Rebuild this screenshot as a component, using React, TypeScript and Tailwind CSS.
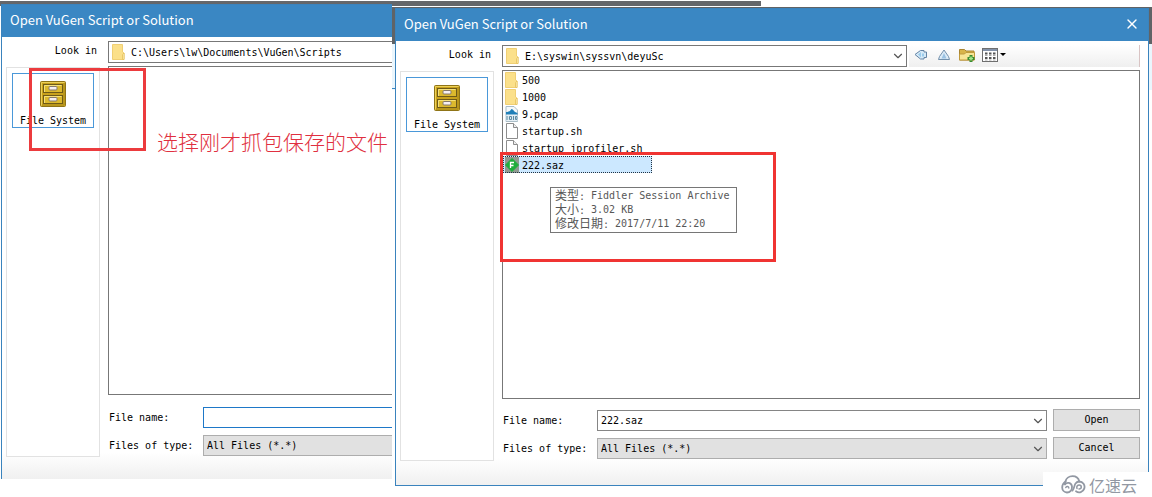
import { useId } from 'react'
import type { ReactNode } from 'react'
import { ChevronDown, X } from 'lucide-react'
import clsx from 'clsx'

type FileKind = 'folder' | 'pcap' | 'plain' | 'saz'

type FileEntry = {
  name: string
  kind: FileKind
  selected?: boolean
}

const FILES: FileEntry[] = [
  { name: '500', kind: 'folder' },
  { name: '1000', kind: 'folder' },
  { name: '9.pcap', kind: 'pcap' },
  { name: 'startup.sh', kind: 'plain' },
  { name: 'startup_jprofiler.sh', kind: 'plain' },
  { name: '222.saz', kind: 'saz', selected: true },
]

const FolderIcon = () => (
  <svg viewBox="0 0 16 16" className="size-4 shrink-0">
    <path d="M1.500.5h10v7.500l1.500 1v6.500H1.500z" fill="#fbe08a" stroke="#f0cf74" />
    <path d="M11.500 10.500l1.500-1.500v6.500h-1.500z" fill="#fff3c4" stroke="#e5bf55" strokeWidth=".8" />
  </svg>
)

const PlainIcon = () => (
  <svg viewBox="0 0 16 16" className="size-4 shrink-0">
    <path d="M2.500.5h7l4 4v11h-11z" fill="#fff" stroke="#8d8d8d" />
    <path d="M9.500.5v4h4" fill="#eee" stroke="#8d8d8d" />
  </svg>
)

const PcapIcon = () => (
  <svg viewBox="0 0 16 16" className="size-4 shrink-0">
    <path d="M2 .5h8l3.500 3.500v11.500H2z" fill="#f4f8fa" stroke="#a9bcc6" />
    <path d="M2 8.500V6c2 0 4-.5 5.500-3C10 3.500 9.500 6 13.500 7v1.500z" fill="#1f7fb8" />
    <path d="M1 9.500h13v5H1z" fill="#dbe9f0" />
    <path d="M3 10v4M5.500 10.500h2v3h-2zM9.500 10v4M11.500 10.500h1.500v3h-1.500z" fill="none" stroke="#5d8ba3" />
  </svg>
)

const SazIcon = () => (
  <svg viewBox="0 0 16 16" className="size-4 shrink-0">
    <path d="M1 0h14v16H1z" fill="#8f9a90" />
    <path d="M8 1.500L14.500 8 8 14.500 1.500 8z" fill="#1fae3c" stroke="#1fae3c" strokeLinejoin="round" />
    <path d="M6.500 11V5.500H10M6.500 8.500h3" fill="none" stroke="#fff" strokeWidth="1.300" />
  </svg>
)

const ICONS: Record<FileKind, () => ReactNode> = {
  folder: FolderIcon,
  plain: PlainIcon,
  pcap: PcapIcon,
  saz: SazIcon,
}

const CabinetIcon = () => (
  <svg viewBox="0 0 26 26" className="size-[26px] shrink-0">
    <rect x=".5" y=".5" width="25" height="25" rx="1" fill="#c9a21c" stroke="#8f7417" />
    <path d="M1.500 24.500v-23h23" fill="none" stroke="#ecd05a" />
    <path d="M24 2v22H2" fill="none" stroke="#a88a1c" />
    <rect x="3.500" y="3.500" width="19" height="8" fill="#dcb92d" stroke="#6e5a18" />
    <rect x="3.500" y="14.500" width="19" height="8" fill="#dcb92d" stroke="#6e5a18" />
    <path d="M4.500 11V4.500h17M4.500 22v-6.500h17" fill="none" stroke="#f5e07a" />
    <rect x="9" y="5.500" width="8" height="3.500" rx="1" fill="#f6f0f2" stroke="#85796a" />
    <rect x="9" y="16.500" width="8" height="3.500" rx="1" fill="#f6f0f2" stroke="#85796a" />
  </svg>
)

const BackIcon = () => (
  <svg viewBox="0 0 16 16" className="size-4">
    <path d="M2 7.500l5.500-4H11V5h2.500v5.500H11V12H7.500z" fill="#d7eaf7" stroke="#6484a5" strokeLinejoin="round" />
    <path d="M5 7.500L8 5v5.500zM9 6.500h2v3H9z" fill="#9bccec" />
  </svg>
)

const UpIcon = () => (
  <svg viewBox="0 0 16 16" className="size-4">
    <path d="M8 3l4.500 6.500 1 3h-11l1-3z" fill="#dcebf7" stroke="#7290ac" strokeLinejoin="round" />
    <path d="M8 6l2.500 5.500h-5z" fill="#9cc3e3" />
  </svg>
)

const NewFolderIcon = () => (
  <svg viewBox="0 0 16 16" className="size-4">
    <path d="M.5 13V2.500h5L7 4h8V13z" fill="#d9b44a" stroke="#a98532" />
    <path d="M.5 13V7h5L7 5.500h8.500V13z" fill="#f8e596" stroke="#c09a3c" />
    <path d="M12 8v7M8.500 11.500h7" stroke="#3b8a2e" strokeWidth="3" />
    <path d="M12 9.500v4M10 11.500h4" stroke="#a5e88e" strokeWidth="1.500" />
  </svg>
)

const ViewIcon = () => (
  <svg viewBox="0 0 24 16" className="h-4 w-6">
    <rect x=".5" y="1.500" width="15" height="13" fill="#fff" stroke="#6f6f6f" />
    <path d="M1 3h14" stroke="#8291a8" strokeWidth="2" />
    <path d="M3 6.500h2.500M7 6.500h2.500M11 6.500h2.500M3 11h2.500M7 11h2.500M11 11h2.500" stroke="#555" strokeWidth="2" />
    <path d="M3 8.500h2.500M7 8.500h2.500M11 8.500h2.500M3 13h2.500M7 13h2.500M11 13h2.500" stroke="#aaa" />
    <path d="M18 6h6l-3 3z" fill="#000" />
  </svg>
)

const TOOLS = [
  { label: 'Back', icon: <BackIcon /> },
  { label: 'Up one level', icon: <UpIcon /> },
  { label: 'New folder', icon: <NewFolderIcon /> },
  { label: 'View menu', icon: <ViewIcon /> },
]

const Chevron = () => (
  <ChevronDown
    className="pointer-events-none absolute top-1 right-0.5 h-3.5 w-3.5 text-[#555]"
    strokeWidth={2}
    aria-hidden
  />
)

const DialogButton = ({ children }: { children: ReactNode }) => (
  <button type="button" className="h-[22px] w-[87px] shrink-0 border border-[#adadad] bg-[#e1e1e1]">
    {children}
  </button>
)

type OpenDialogProps = {
  path: string
  files: FileEntry[]
  fileName: string
  focused?: boolean
  // the right part of the dialog runs behind another window
  covered?: boolean
}

const OpenDialog = ({ path, files, fileName, focused = false, covered = false }: OpenDialogProps) => {
  const id = useId()
  const openEdge = covered && 'border-r-0'

  return (
    <section
      className={clsx(
        "border border-[#3a83bd] bg-white font-['DejaVu_Sans_Mono','Noto_Sans_CJK_SC',monospace] text-[10px] leading-4 text-black",
        covered && 'border-r-0 border-b-0',
      )}
    >
      <header className="flex h-8 items-center justify-between bg-[#3a87c3] px-2 pb-0.5 text-white">
        <h1 className="font-['Noto_Sans_CJK_SC',sans-serif] text-[13px] leading-5">Open VuGen Script or Solution</h1>
        {!covered && (
          <button type="button" aria-label="Close">
            <X className="size-4" strokeWidth={2} />
          </button>
        )}
      </header>

      <div
        className={clsx(
          'bg-linear-to-b from-white from-94% to-[#f0f0f0] pt-1 pl-1',
          covered ? 'pb-[22px]' : 'pr-2 pb-6',
        )}
      >
        <div className="flex h-[22px] gap-2">
          <label htmlFor={`${id}-path`} className="w-[94px] shrink-0 pt-0.5 pr-[3px] text-right">
            Look in
          </label>
          <div className="flex min-w-0 flex-1 gap-0.5">
            <div className="relative min-w-0 flex-1">
              <select
                id={`${id}-path`}
                className={clsx(
                  'h-full w-full appearance-none border border-[#777] bg-white pt-0.5 pl-[22px]',
                  openEdge,
                )}
              >
                <option>{path}</option>
              </select>
              <span className="pointer-events-none absolute top-[3px] left-[3px]">
                <FolderIcon />
              </span>
              {!covered && <Chevron />}
            </div>
            {!covered && (
              <div className="flex w-[231px] shrink-0 items-center gap-[7px] border-r border-[#d9c4c4] bg-linear-to-b from-white to-[#efefef] pb-0.5 pl-1">
                {TOOLS.map((t) => (
                  <button key={t.label} type="button" aria-label={t.label}>
                    {t.icon}
                  </button>
                ))}
              </div>
            )}
          </div>
        </div>

        <div className="mt-[3px] flex gap-2">
          <nav className="mt-px h-[390px] w-[94px] shrink-0 border border-[#e2e2e2] bg-white p-[5px]">
            <button
              type="button"
              className="flex h-[55px] w-full flex-col items-center border border-[#4a98d9] bg-white pt-[7px]"
            >
              <CabinetIcon />
              <span className="mt-1.5 whitespace-nowrap">File System</span>
            </button>
          </nav>

          <div className="min-w-0 flex-1">
            <ul className={clsx('h-[329px] border border-[#777] bg-white', openEdge)}>
              {files.map((f) => {
                const Icon = ICONS[f.kind]
                return (
                  <li key={f.name}>
                    <button
                      type="button"
                      className={clsx(
                        'flex h-[17px] items-center gap-0.5 pl-px',
                        f.selected &&
                          'w-[149px] bg-[#cce8ff] outline-1 -outline-offset-1 outline-[#234] outline-dotted',
                      )}
                    >
                      <Icon />
                      <span className="pt-0.5">{f.name}</span>
                    </button>
                  </li>
                )
              })}
            </ul>

            <div className={clsx('flex h-[22px] gap-1.5', covered ? 'mt-[11px]' : 'mt-2.5')}>
              <div className="flex min-w-0 flex-1 items-end">
                <label htmlFor={`${id}-name`} className="w-[95px] shrink-0 self-center pt-0.5 pl-px">
                  File name:
                </label>
                <div className="relative min-w-0 flex-1">
                  <input
                    id={`${id}-name`}
                    defaultValue={fileName}
                    className={
                      focused
                        ? 'block h-[21px] w-full border border-r-0 border-[#1e78c8] bg-white px-[3px] outline-none'
                        : 'block h-[21px] w-full border border-[#858585] bg-white px-[3px] outline-none'
                    }
                  />
                  {!covered && <Chevron />}
                </div>
              </div>
              {!covered && <DialogButton>Open</DialogButton>}
            </div>

            <div className="mt-1.5 flex h-[22px] gap-1.5">
              <div className="flex min-w-0 flex-1 items-end">
                <label htmlFor={`${id}-type`} className="w-[95px] shrink-0 self-center pt-0.5 pl-px">
                  Files of type:
                </label>
                <div className="relative min-w-0 flex-1">
                  <select
                    id={`${id}-type`}
                    className={clsx(
                      'block h-[21px] w-full appearance-none border border-[#adadad] bg-[#e1e1e1] px-[3px]',
                      openEdge,
                    )}
                  >
                    <option>All Files (*.*)</option>
                  </select>
                  {!covered && <Chevron />}
                </div>
              </div>
              {!covered && <DialogButton>Cancel</DialogButton>}
            </div>
          </div>
        </div>
      </div>
    </section>
  )
}

const Tooltip = () => (
  <dl className="absolute top-[187px] left-[550px] border border-[#767676] bg-white px-1 py-px font-['DejaVu_Sans_Mono','Noto_Sans_CJK_SC',monospace] text-[10px] leading-[14px] whitespace-nowrap text-[#575757]">
    {[
      ['类型', 'Fiddler Session Archive'],
      ['大小', '3.02 KB'],
      ['修改日期', '2017/7/11 22:20'],
    ].map(([term, value]) => (
      <div key={term} className="flex h-[14px] gap-1.5 pr-0.5">
        <dt>
          <span className="text-xs leading-[14px]">{term}</span>:
        </dt>
        <dd>{value}</dd>
      </div>
    ))}
  </dl>
)

const Watermark = () => (
  <div className="absolute right-0 bottom-0 flex h-[25px] w-[109px] items-center gap-[3px] bg-white pl-[18px] text-[#9298a3]">
    <svg
      viewBox="0 0 25 19"
      className="h-[19px] w-[25px] shrink-0"
      fill="none"
      stroke="currentColor"
      strokeWidth="1.800"
      strokeLinecap="round"
    >
      <path d="M4.500 6.500C5 3.500 8 1.200 11.500 1.200c3.500 0 6 2 6.800 5.300" />
      <path d="M4 9.500C5.500 7 10.500 7 11 11.500c.3 3.500-2 6-5 6a5 5 0 0 1-4.800-5c0-2.500 1.300-4.500 3.300-6" />
      <path d="M4.800 12.500c.8-1.500 3-1.200 3 .5" strokeWidth="1.500" />
      <path d="M11.500 15.500c2-2 1.500-5 3-7 1-1.300 2.300-2 3.800-2a5.400 5.400 0 1 1-3.300 9.800" />
      <path d="M16 13.500c-.8-2 .5-3.500 2.200-3.500 2.800 0 2.800 4-.2 4" strokeWidth="1.500" />
    </svg>
    <span className="font-['Noto_Sans_CJK_SC',sans-serif] text-base leading-5 whitespace-nowrap">亿速云</span>
  </div>
)

export default function App() {
  return (
    <main className="relative min-h-screen overflow-hidden bg-white">
      {/* strips of the window behind the dialogs */}
      <div className="absolute top-px left-0 h-[5px] w-[761px] bg-[#65676a]" />
      <div className="absolute top-[7px] right-0 left-[392px] h-[37px] bg-[#606366]" />
      <div className="absolute top-11 right-0 left-[392px] h-[46px] bg-[#eaf6fd]" />
      <div className="absolute top-[88px] left-[391px] h-px w-1 bg-[#3a87c3]" />

      <div className="absolute top-1 left-px w-[391px]">
        <OpenDialog path="C:\Users\lw\Documents\VuGen\Scripts" files={[]} fileName="" focused covered />
      </div>
      <div className="absolute top-[68px] left-[29px] h-[83px] w-[117px] border-3 border-[#ec3b3e]" />
      <p className="absolute top-[127px] left-[157px] font-['Noto_Sans_CJK_SC',sans-serif] text-[21px] leading-7 font-light whitespace-nowrap text-[#e03040]">
        选择刚才抓包保存的文件
      </p>

      <div className="absolute top-2 right-[3px] left-[395px]">
        <OpenDialog path="E:\syswin\syssvn\deyuSc" files={FILES} fileName="222.saz" />
      </div>
      <div className="absolute top-[152px] left-[500px] h-[110px] w-[276px] border-3 border-[#f03432]" />
      <Tooltip />
      <Watermark />
    </main>
  )
}
